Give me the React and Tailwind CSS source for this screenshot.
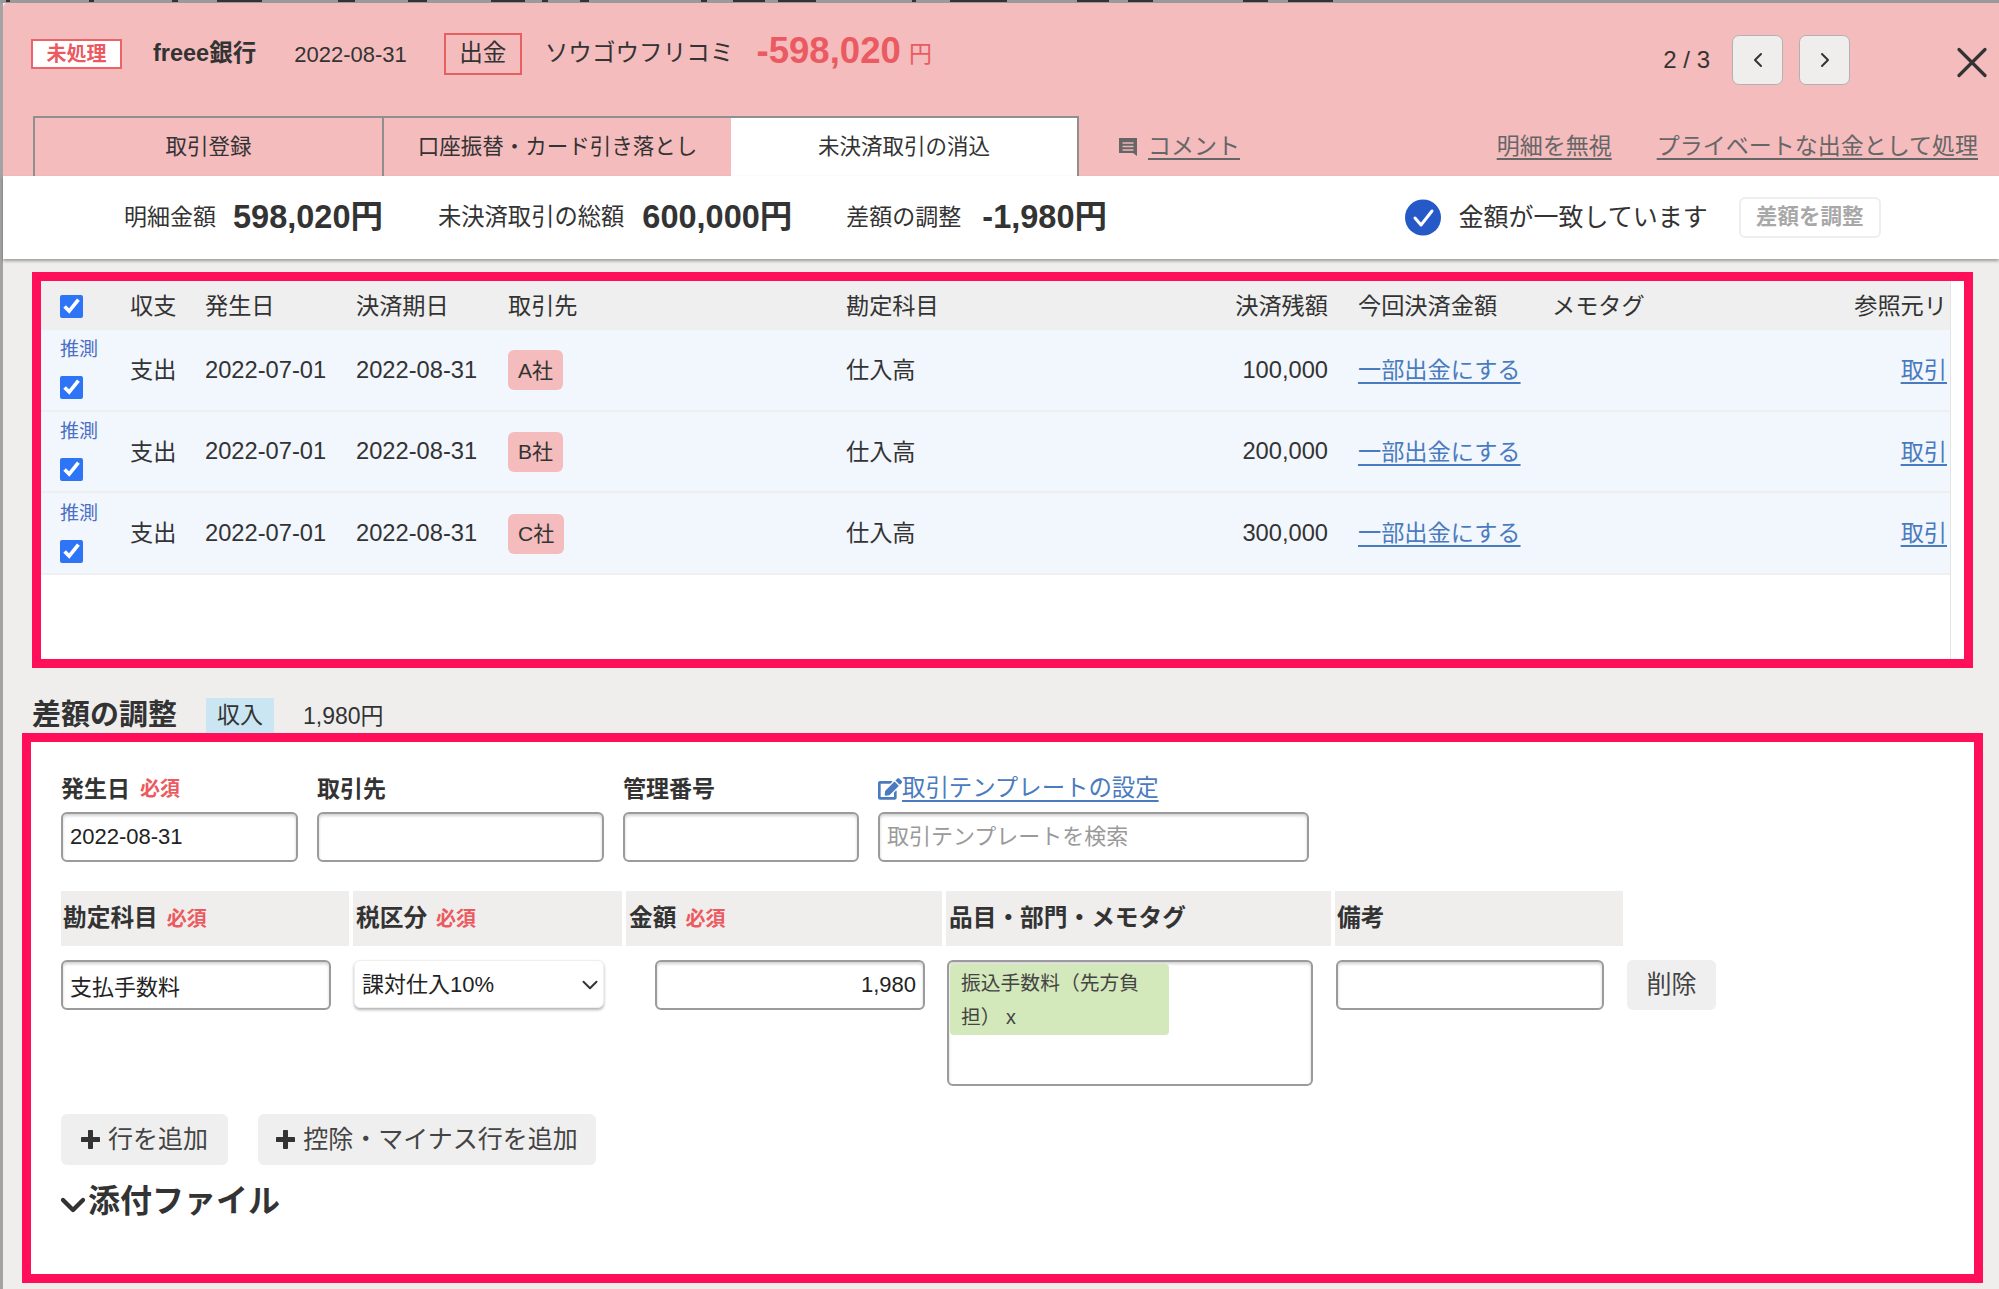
import React from 'react';
import { ChevronLeft, ChevronRight, ChevronDown, X } from 'lucide-react';
import { FaEdit } from 'react-icons/fa';

const inputClass =
  'h-[50px] bg-white border-2 border-[#9b9b9b] rounded-[6px] shadow-[inset_0_2px_3px_rgba(0,0,0,0.18)] px-[7px] text-[22px] text-[#222] outline-none';

const rows = [
  { partner: 'A社', balance: '100,000' },
  { partner: 'B社', balance: '200,000' },
  { partner: 'C社', balance: '300,000' },
];

const tableCols = 'grid grid-cols-[89px_75px_151px_152px_338px_304px_208px_194px_248px_147px]';

// bits of the page text that stick out above the modal
const behind = [
  [6, 4], [89, 5], [172, 6], [217, 45], [338, 17], [408, 19], [491, 34], [542, 6], [580, 9], [701, 6],
  [733, 32], [778, 38], [912, 4], [950, 57], [1077, 32], [1128, 25], [1243, 25], [1288, 45],
];

const Required = () => <span className="text-[20px] font-bold text-[#ec5a5f]">必須</span>;

const Check = () => (
  <input type="checkbox" defaultChecked className="w-[23px] h-[23px] m-0 accent-[#2d75f6] block" />
);

const PlusIcon = () => (
  <svg width="19" height="19" viewBox="0 0 19 19" className="shrink-0">
    <path d="M9.5 1.5v16M1.5 9.5h16" fill="none" stroke="#333" strokeWidth="5" strokeLinecap="round" />
  </svg>
);

export default function App() {
  return (
    <div className="w-[1999px] h-[1289px] overflow-hidden bg-[#efeeed] flex flex-col font-['Liberation_Sans','Noto_Sans_CJK_JP',sans-serif] text-[#333]">
      {/* page behind the modal */}
      <svg className="block shrink-0 bg-[#9a9a9a]" width="1999" height="3" viewBox="0 0 1999 3">
        {behind.map(([x, w]) => (
          <rect key={x} x={x} y="0" width={w} height="2" fill="#333" />
        ))}
      </svg>

      <div className="flex-1 ml-[3px] flex flex-col shadow-[-3px_0_0_#a3a3a3]">
        {/* Header */}
        <div className="h-[173px] shrink-0 bg-[#f4bcbd] rounded-tl-[5px] flex flex-col">
          <div className="h-[113px] flex items-start pl-[28px]">
            <div className="mt-[30px] h-[42px] flex items-center">
              <span className="w-[91px] h-[30px] flex items-center justify-center border-2 border-[#ec6468] bg-white text-[20px] font-bold text-[#ec5a5f] leading-none">
                未処理
              </span>
              <span className="ml-[31px] text-[23.5px] font-bold">freee銀行</span>
              <span className="ml-[38px] text-[22px]">2022-08-31</span>
              <span className="ml-[37px] w-[78px] h-[42px] flex items-center justify-center border-2 border-[#e6605f] text-[23.6px] leading-none">
                出金
              </span>
              <span className="ml-[23px] text-[23.6px] leading-none">ソウゴウフリコミ</span>
              <span className="ml-[23px] text-[36.6px] font-bold text-[#ea5a60] leading-none -mt-[6px]">-598,020</span>
              <span className="ml-[8px] text-[23px] text-[#ea5a60] leading-none">円</span>
            </div>
            <div className="ml-auto mt-[31px] mr-[1.5px] flex items-center">
              <span className="text-[24px]">2 / 3</span>
              <button className="ml-[22px] w-[51px] h-[50px] flex items-center justify-center bg-[#efeeed] border border-[#b5b0b0] rounded-[7px]">
                <ChevronLeft size={24} strokeWidth={2} />
              </button>
              <button className="ml-[16px] w-[51px] h-[50px] flex items-center justify-center bg-[#efeeed] border border-[#b5b0b0] rounded-[7px]">
                <ChevronRight size={24} strokeWidth={2} />
              </button>
              <X className="ml-[95.5px] translate-y-[2.5px] text-[#333]" size={52} strokeWidth={1.5} />
            </div>
          </div>

          {/* Tabs */}
          <div className="h-[60px] flex pl-[30px] items-stretch text-[21.5px]">
            <div className="w-[349px] border-t-2 border-l-2 border-[#8f8f8f] flex items-center justify-center">取引登録</div>
            <div className="w-[349px] border-t-2 border-l-2 border-[#8f8f8f] flex items-center justify-center">口座振替・カード引き落とし</div>
            <div className="w-[348px] border-t-2 border-r-2 border-[#8f8f8f] bg-white flex items-center justify-center">未決済取引の消込</div>
            <div className="ml-[39px] flex items-center text-[#666]">
              <svg width="20" height="20" viewBox="0 0 20 20" className="shrink-0 mt-[2px]">
                <path d="M1 1h18v18l-4-3H1z" fill="#666" />
                <path d="M4.5 6h11M4.5 9.5h11M4.5 13h11" stroke="#f0b6b7" strokeWidth="1.4" />
              </svg>
              <span className="ml-[10px] text-[23px] underline underline-offset-4">コメント</span>
            </div>
            <div className="ml-auto mr-[21px] flex items-center text-[23px] text-[#666] underline underline-offset-4">
              <span>明細を無視</span>
              <span className="ml-[45px]">プライベートな出金として処理</span>
            </div>
          </div>
        </div>

        {/* Summary */}
        <div className="h-[83px] shrink-0 bg-white flex items-center pl-[121px] shadow-[0_2px_3px_rgba(0,0,0,0.35)]">
          <span className="text-[23px]">明細金額</span>
          <span className="ml-[17px] text-[32.5px] font-bold leading-none">598,020円</span>
          <span className="ml-[55px] text-[23.3px]">未決済取引の総額</span>
          <span className="ml-[18px] text-[32.5px] font-bold leading-none">600,000円</span>
          <span className="ml-[54px] text-[23px]">差額の調整</span>
          <span className="ml-[21px] text-[32.5px] font-bold leading-none">-1,980円</span>
          <svg className="ml-[297.5px] w-[36px] h-[37px]" viewBox="0 0 36 37">
            <circle cx="18" cy="18.5" r="18" fill="#2559c7" />
            <path d="M10 19l6 7 11-14" fill="none" stroke="#fff" strokeWidth="3" strokeLinecap="round" strokeLinejoin="round" />
          </svg>
          <span className="ml-[18px] text-[25px]">金額が一致しています</span>
          <button className="ml-[31px] w-[142px] h-[41px] bg-white border-2 border-[#efeeed] rounded-[6px] text-[21.5px] font-bold text-[#a8a8a8]">
            差額を調整
          </button>
        </div>

        {/* Matched transactions */}
        <div className="mt-[13px] ml-[29px] w-[1941px] h-[396px] shrink-0 border-[9px] border-[#ff0f5a] bg-white flex">
          <div className="w-[1909px] text-[23.2px]">
            <div className={`${tableCols} h-[49px] items-center bg-[#efefef] pt-[1px]`}>
              <div className="pl-[19px]"><Check /></div>
              <div>収支</div>
              <div>発生日</div>
              <div>決済期日</div>
              <div>取引先</div>
              <div>勘定科目</div>
              <div className="text-right pr-[30px]">決済残額</div>
              <div>今回決済金額</div>
              <div>メモタグ</div>
              <div className="text-right">参照元リ</div>
            </div>
            {rows.map((row) => (
              <div key={row.partner} className={`${tableCols} h-[81.7px] pt-[1px] items-center bg-[#f2f6fd] border-b-2 border-[#efefef]`}>
                <div className="pl-[19px] flex flex-col mb-[3px]">
                  <span className="text-[19px] leading-[24px] text-[#4a6fc4]">推測</span>
                  <span className="mt-[14px]"><Check /></span>
                </div>
                <div>支出</div>
                <div className="text-[23.7px]">2022-07-01</div>
                <div className="text-[23.7px]">2022-08-31</div>
                <div>
                  <span className="inline-flex items-center h-[40px] px-[10px] rounded-[6px] bg-[#f4bcbd] text-[21px]">{row.partner}</span>
                </div>
                <div>仕入高</div>
                <div className="text-right pr-[30px] text-[23.7px]">{row.balance}</div>
                <div className="text-[#4a7bc0] underline underline-offset-4">一部出金にする</div>
                <div />
                <div className="text-right text-[#4a7bc0] underline underline-offset-4">取引</div>
              </div>
            ))}
          </div>
          <div className="flex-1 border-l border-[#e4e4e4]" />
        </div>

        {/* Difference adjustment */}
        <div className="h-[65px] shrink-0 ml-[29px] flex items-end">
          <h2 className="mb-[3px] text-[29px] font-bold leading-none">差額の調整</h2>
          <span className="ml-[29px] w-[68px] h-[35px] flex items-center justify-center bg-[#c9e6f2] text-[23px] leading-none">収入</span>
          <span className="ml-[29px] mb-[5px] text-[23px] leading-none">1,980円</span>
        </div>

        <div className="ml-[19px] w-[1961px] h-[550px] shrink-0 border-[9px] border-[#ff0f5a] bg-white pt-[33px] pl-[30px]">
          {/* Top fields */}
          <div className="grid grid-cols-[237px_287px_236px_431px] gap-x-[19px] gap-y-[9px]">
            <div className="h-[28px] flex items-center gap-[10px] text-[23px] font-bold">発生日<Required /></div>
            <div className="h-[28px] flex items-center text-[23px] font-bold">取引先</div>
            <div className="h-[28px] flex items-center text-[23px] font-bold">管理番号</div>
            <div className="h-[28px] flex items-center text-[23.4px] text-[#4a7bc0] underline underline-offset-4">
              <FaEdit size={24} className="shrink-0" />
              取引テンプレートの設定
            </div>
            <input className={`${inputClass} w-full`} defaultValue="2022-08-31" />
            <input className={`${inputClass} w-full`} />
            <input className={`${inputClass} w-full`} />
            <input className={`${inputClass} w-full placeholder:text-[#9a9a9a]`} placeholder="取引テンプレートを検索" />
          </div>

          {/* Line header */}
          <div className="mt-[29px] h-[55px] grid grid-cols-[288px_269px_316px_385px_288px] gap-x-[4px] text-[23.7px] font-bold">
            <div className="bg-[#efeeed] pl-[2px] flex items-center gap-[9px]">勘定科目<Required /></div>
            <div className="bg-[#efeeed] pl-[3px] flex items-center gap-[9px]">税区分<Required /></div>
            <div className="bg-[#efeeed] pl-[3px] flex items-center gap-[9px]">金額<Required /></div>
            <div className="bg-[#efeeed] pl-[3px] flex items-center">品目・部門・メモタグ</div>
            <div className="bg-[#efeeed] pl-[2px] flex items-center">備考</div>
          </div>

          {/* Line row */}
          <div className="mt-[14px] h-[126px] flex items-start">
            <input className={`${inputClass} w-[270px]`} defaultValue="支払手数料" />
            <div className="relative ml-[23px] w-[250px]">
              <select className="appearance-none w-full h-[48px] bg-white border border-[#eeeeee] rounded-[6px] shadow-[0_2px_3px_rgba(0,0,0,0.3)] pl-[7px] text-[22px] text-[#222] outline-none">
                <option>課対仕入10%</option>
              </select>
              <ChevronDown size={26} strokeWidth={1.8} className="absolute right-[1.5px] top-[12px] text-[#333] pointer-events-none" />
            </div>
            <input className={`${inputClass} ml-[51px] w-[270px] text-right`} defaultValue="1,980" />
            <div className="ml-[22px] w-[366px] h-[126px] border-2 border-[#9b9b9b] rounded-[6px] shadow-[inset_0_2px_3px_rgba(0,0,0,0.18)] pt-[2px] pl-[1px]">
              <div className="w-[219px] h-[71px] bg-[#d4e9bb] rounded-[4px] px-[11px] py-[2px] text-[19.8px] leading-[34px] text-[#444]">
                振込手数料（先方負担） x
              </div>
            </div>
            <input className={`${inputClass} ml-[23px] w-[268px]`} />
            <button className="ml-[23px] w-[89px] h-[50px] bg-[#efefef] rounded-[6px] text-[25px] text-[#444]">削除</button>
          </div>

          {/* Add line buttons */}
          <div className="mt-[28px] flex gap-[30px]">
            <button className="w-[167px] h-[51px] bg-[#efefef] rounded-[6px] flex items-center justify-center gap-[8px] text-[25px] text-[#444]">
              <PlusIcon />
              行を追加
            </button>
            <button className="w-[338px] h-[51px] bg-[#efefef] rounded-[6px] flex items-center justify-center gap-[8px] text-[25px] text-[#444]">
              <PlusIcon />
              控除・マイナス行を追加
            </button>
          </div>

          {/* Attachments */}
          <div className="mt-[15px] h-[40px] flex items-center">
            <ChevronDown size={40} strokeWidth={2.6} className="shrink-0 text-[#333] -ml-[8px] -mr-[5px] mt-[10px]" />
            <span className="text-[32px] font-bold leading-none mt-[2px]">添付ファイル</span>
          </div>
        </div>
      </div>
    </div>
  );
}
